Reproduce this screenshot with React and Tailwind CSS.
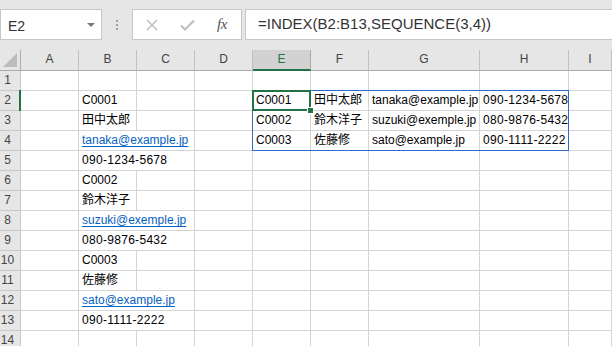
const cols = ['A', 'B', 'C', 'D', 'E', 'F', 'G', 'H', 'I']

const colB = {
  2: { t: 'C0001' },
  3: { t: '田中太郎' },
  4: { t: 'tanaka@example.jp', link: true },
  5: { t: '090-1234-5678', tel: true },
  6: { t: 'C0002' },
  7: { t: '鈴木洋子' },
  8: { t: 'suzuki@exemple.jp', link: true },
  9: { t: '080-9876-5432', tel: true },
  10: { t: 'C0003' },
  11: { t: '佐藤修' },
  12: { t: 'sato@example.jp', link: true },
  13: { t: '090-1111-2222', tel: true },
}

const spill = [4, 5, 8, 9, 12, 13]

const range = {
  2: ['C0001', '田中太郎', 'tanaka@example.jp', '090-1234-5678'],
  3: ['C0002', '鈴木洋子', 'suzuki@exemple.jp', '080-9876-5432'],
  4: ['C0003', '佐藤修', 'sato@example.jp', '090-1111-2222'],
}

const cell = 'box-border border-r border-b border-[#d4d4d4] px-[3px] leading-[19px] whitespace-nowrap overflow-visible text-black'

function Value({ v }) {
  if (!v) return null
  if (v.link) return <span className="text-[#0563c1] underline underline-offset-[2px]">{v.t}</span>
  if (v.tel) return <span className="tracking-[0.3px]">{v.t}</span>
  return <span>{v.t}</span>
}

function Row({ n }) {
  const b = colB[n]
  const wide = spill.includes(n)
  const r = range[n]
  return (
    <>
      <div className="box-border border-r border-b border-[#c8c8c8] bg-[#e6e6e6] pr-[5px] text-center text-[12px] leading-[19px] text-[#444]">{n}</div>
      <div className={cell} />
      <div className={cell + (wide ? ' col-span-2' : '')}><Value v={b} /></div>
      {!wide && <div className={cell} />}
      <div className={cell} />
      <div className={cell}>{r && r[0]}</div>
      <div className={cell}>{r && r[1]}</div>
      <div className={cell}>{r && r[2]}</div>
      <div className={cell}>{r && <span className="tracking-[0.3px]">{r[3]}</span>}</div>
      <div className={cell} />
    </>
  )
}

export default function App() {
  const rows = Array.from({ length: 14 }, (_, i) => i + 1)
  return (
    <div className="w-[612px] h-[346px] overflow-hidden bg-white font-['Liberation_Sans','Noto_Sans_CJK_JP',sans-serif] text-[12px]">
      {/* formula bar */}
      <div className="flex items-start h-[50px] pt-[9px] bg-[#e6e6e6]">
        <div className="box-border flex items-center justify-between w-[102px] h-[31px] pt-[3px] pl-[7px] pr-[6px] bg-white border border-[#c6c6c6]">
          <span className="text-[14px] text-[#333]">E2</span>
          <svg width="8" height="5" viewBox="0 0 8 5" className="mb-[2px]"><path d="M0 0h8L4 4z" fill="#777" /></svg>
        </div>
        <div className="flex flex-col items-center justify-center gap-[2px] w-[30px] h-[31px]">
          <span className="w-[2px] h-[2px] bg-[#a0a0a0]" />
          <span className="w-[2px] h-[2px] bg-[#a0a0a0]" />
          <span className="w-[2px] h-[2px] bg-[#a0a0a0]" />
        </div>
        <div className="box-border flex items-center w-[110px] h-[31px] bg-white border border-[#c6c6c6]">
          <svg width="12" height="12" viewBox="0 0 12 12" className="ml-[13px]">
            <path d="M1 1l10 10M11 1L1 11" stroke="#c0c0c0" strokeWidth="1.6" />
          </svg>
          <svg width="15" height="12" viewBox="0 0 15 12" className="ml-[22px]">
            <path d="M1 6.5l4 4L14 1.5" stroke="#c0c0c0" strokeWidth="2.2" fill="none" />
          </svg>
          <span className="ml-[22px] font-['Liberation_Serif',serif] italic text-[15px] text-[#555] tracking-[-0.5px]">fx</span>
        </div>
        <div className="box-border flex items-center flex-1 ml-[3px] h-[31px] pl-[12px] bg-white border border-r-0 border-[#c6c6c6] text-[15px] text-[#333] whitespace-nowrap">
          =INDEX(B2:B13,SEQUENCE(3,4))
        </div>
      </div>

      {/* sheet */}
      <div className="relative">
        <div className="grid grid-cols-[21px_58px_58px_58px_58px_58px_58px_111px_89px_1fr] grid-rows-[21px_repeat(14,20px)]">
          <div className="box-border flex items-end justify-end border-r border-b border-[#ababab] bg-[#e6e6e6] pr-[3px] pb-[3px]">
            <svg width="14" height="14" viewBox="0 0 14 14"><path d="M14 0v14H0z" fill="#bcbcbc" /></svg>
          </div>
          {cols.map(c => (
            <div
              key={c}
              className={
                c === 'E'
                  ? 'box-border border-r border-b-2 border-r-[#ababab] border-b-[#217346] bg-[#d2d2d2] text-center text-[12px] leading-[19px] text-[#217346]'
                  : 'box-border border-r border-b border-r-[#c0c0c0] border-b-[#ababab] bg-[#e6e6e6] text-center text-[12px] leading-[19px] text-[#444]'
              }
            >
              {c}
            </div>
          ))}
          {rows.map(n => <Row key={n} n={n} />)}
        </div>

        {/* selection overlays */}
        <div className="absolute left-[19px] top-[40px] w-[2px] h-[21px] bg-[#217346]" />
        <div className="absolute left-[252px] top-[40px] w-[317px] h-[61px] border border-[#2f6ad0]" />
        <div className="absolute left-[252px] top-[40px] w-[59px] h-[21px] border-2 border-[#217346]" />
        <div className="absolute left-[307px] top-[57px] w-[7px] h-[7px] bg-[#217346] border border-white" />
      </div>
    </div>
  )
}
